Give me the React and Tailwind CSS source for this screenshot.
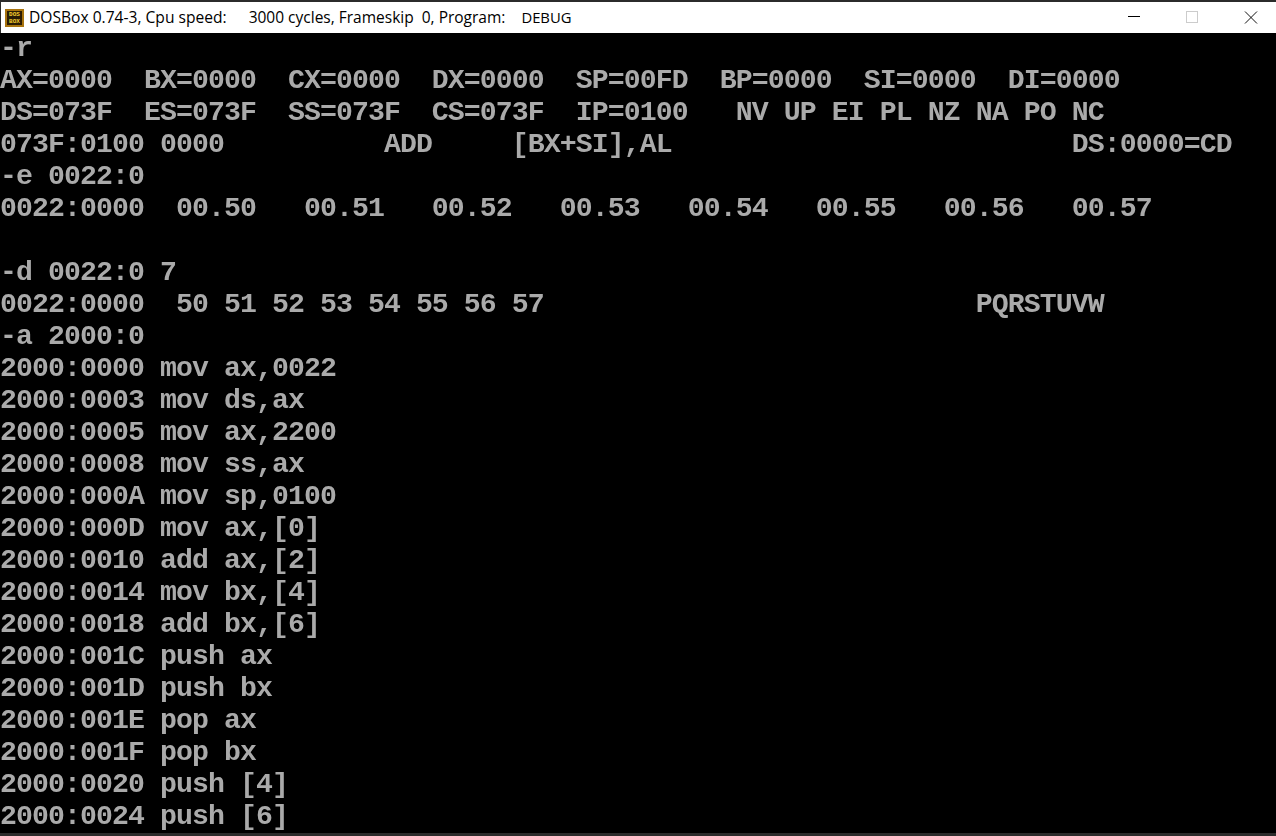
const lines = [
  '-r',
  'AX=0000  BX=0000  CX=0000  DX=0000  SP=00FD  BP=0000  SI=0000  DI=0000',
  'DS=073F  ES=073F  SS=073F  CS=073F  IP=0100   NV UP EI PL NZ NA PO NC',
  '073F:0100 0000          ADD     [BX+SI],AL                         DS:0000=CD',
  '-e 0022:0',
  '0022:0000  00.50   00.51   00.52   00.53   00.54   00.55   00.56   00.57',
  ' ',
  '-d 0022:0 7',
  '0022:0000  50 51 52 53 54 55 56 57                           PQRSTUVW',
  '-a 2000:0',
  '2000:0000 mov ax,0022',
  '2000:0003 mov ds,ax',
  '2000:0005 mov ax,2200',
  '2000:0008 mov ss,ax',
  '2000:000A mov sp,0100',
  '2000:000D mov ax,[0]',
  '2000:0010 add ax,[2]',
  '2000:0014 mov bx,[4]',
  '2000:0018 add bx,[6]',
  '2000:001C push ax',
  '2000:001D push bx',
  '2000:001E pop ax',
  '2000:001F pop bx',
  '2000:0020 push [4]',
  '2000:0024 push [6]',
];

function DosIcon() {
  return (
    <div className="w-[19px] h-[18px] bg-[#2a1c04] border-2 border-[#a8740f] flex flex-col items-center justify-center font-['Liberation_Mono',monospace] font-bold text-[6px] leading-[7px] text-[#f5d030] shrink-0">
      <span>DOS</span>
      <span>BOX</span>
    </div>
  );
}

export default function App() {
  return (
    <div className="w-[1276px] h-[836px] overflow-hidden bg-black flex flex-col">
      {/* title bar */}
      <div className="h-[33px] shrink-0 bg-white border-t-2 border-l border-[#2b2b2b] flex items-center pl-[4px] font-['Open_Sans',sans-serif] text-[15.6px] text-black">
        <DosIcon />
        <span className="ml-[5px] whitespace-pre">DOSBox 0.74-3, Cpu speed:</span>
        <span className="ml-[22px] whitespace-pre text-[15.5px]">3000 cycles, Frameskip  0, Program:</span>
        <span className="ml-[16px] text-[14.8px]">DEBUG</span>
        <div className="ml-auto pr-[18px] flex items-center gap-[44px]">
          <svg width="14" height="14" viewBox="0 0 14 14" className="text-black">
            <path d="M0 5.5H12" stroke="currentColor" />
          </svg>
          <svg width="14" height="14" viewBox="0 0 14 14">
            <rect x="0.5" y="0.5" width="11" height="11" fill="none" stroke="#cccccc" />
          </svg>
          <svg width="14" height="14" viewBox="0 0 14 14">
            <path d="M1 0.5L13 12.5M13 0.5L1 12.5" stroke="#111111" />
          </svg>
        </div>
      </div>

      {/* dos screen, 80x25 cells of 16x32 */}
      <div className="h-[800px] shrink-0 font-['Liberation_Mono',monospace] font-bold text-[28.2px] leading-[32px] tracking-[-0.92px] text-[#aaaaaa] whitespace-pre blur-[0.5px]">
        {lines.map((line, i) => (
          <div key={i} className="h-[32px]">{line}</div>
        ))}
      </div>
      <div className="flex-1 bg-[#2b2b2b]" />
    </div>
  );
}
